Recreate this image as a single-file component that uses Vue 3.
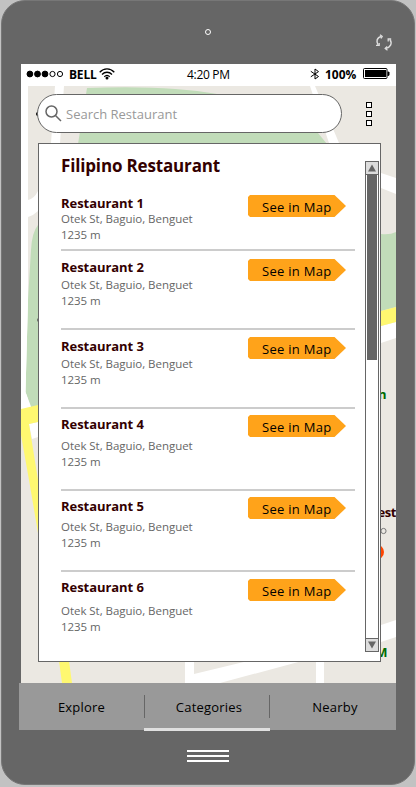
<script setup>
const restaurants = [1, 2, 3, 4, 5, 6].map((n) => ({
  name: `Restaurant ${n}`,
  address: 'Otek St, Baguio, Benguet',
  distance: '1235 m'
}))
const tabs = ['Explore', 'Categories', 'Nearby']
const activeTab = 'Categories'
</script>

<template>
  <div class="phone">
    <header class="bezel">
      <svg class="camera" width="8" height="8" viewBox="0 0 8 8"><circle cx="4" cy="4" r="2.5" /></svg>
      <svg class="rotate" width="18" height="18" viewBox="0 0 18 18">
        <path d="M3.200 11C.8 7.500 1.800 3.500 6.500 2.500M15 5.500c2.500 4 .5 8-4.500 9" />
        <path class="head" d="M5 .8 7.200 2.500 6 4.500M1 11.300h3.200V9M13.200 7.500V5h3M12.200 12.500l-2 2 2.300 1.800" />
      </svg>
    </header>

    <main class="screen">
      <div class="status">
        <svg class="signal" width="38" height="10" viewBox="0 0 38 10">
          <circle class="on" cx="3.900" cy="5" r="2.900" /><circle class="on" cx="11.500" cy="5" r="2.900" /><circle class="on" cx="19" cy="5" r="2.900" />
          <circle cx="26.500" cy="5" r="2.600" /><circle cx="34" cy="5" r="2.600" />
        </svg>
        <b class="carrier">BELL</b>
        <svg class="wifi" width="16" height="12" viewBox="0 0 16 12">
          <path d="M.7 4.200C4.800-.2 11.200-.2 15.300 4.200M3 6.500c2.900-3 7.100-3 10 0M5.300 8.700c1.600-1.600 3.800-1.600 5.400 0" />
          <circle cx="8" cy="10" r="1.500" />
        </svg>
        <span class="time">4:20 PM</span>
        <svg class="bluetooth" width="10" height="12" viewBox="0 0 10 12"><path d="M.8 3.300 8.500 8.500 5 11V1l3.500 2.600L.8 8.800" /></svg>
        <b class="percent">100%</b>
        <svg class="battery" width="27" height="12" viewBox="0 0 27 12">
          <rect class="shell" x=".5" y=".5" width="23.500" height="10" rx="1" />
          <rect x="2" y="2" width="21" height="7" /><path d="M24.500 3.500h1l1 1v2.500l-1 1h-1z" />
        </svg>
      </div>

      <div class="view">
        <svg class="map" viewBox="21 86 375 597">
          <rect x="21" y="86" width="375" height="597" fill="#ebe8e2" />
          <path class="road" d="M21 86h7v324h-7zM55 86h9l-4 57h-9zM310 86h5l24 57h-10zM381 173l15 5v16l-15-6zM28 200q6-1 10-9v20q-4 4-10 6z" />
          <path class="park" d="M87 88q80-3 130 6l101 39 9 11H78zM381 234q9 1 15-2v75l-15 4zM38 225q-6 7-7 25l-3 50-2.500 92L31 408l8-2z" />
          <path class="road" d="M28 300l-2.500 92 6 16-10.500 4V300z" />
          <path class="road" d="M381 326l15-4v16l-15 5zM29 424l9-2v15l-6 2zM381 625l15-5v17l-15 5zM185 661h9v13l54-13h54l-82 22h-35zM316 661h8v22h-8z" />
          <path class="highway" d="M381 311l15-4v15l-15 4zM21 409l17-4v17l-9 2 9 56v53l-9-53-8-45zM59 661h10l3 22H62z" />
          <text class="place" x="386.500" y="399" text-anchor="end">n</text>
          <text class="poi" x="377.500" y="517">est</text>
          <text class="place" x="387.500" y="656.500" text-anchor="end">M</text>
          <circle cx="383.500" cy="531" r="2.600" fill="none" stroke="#777" />
          <circle cx="376.500" cy="552" r="7.500" fill="#ff4500" />
          <circle cx="38" cy="114" r="2" /><circle cx="39" cy="320" r="2" fill="#666" />
        </svg>

        <div class="toolbar">
          <div class="search">
            <svg width="17" height="17" viewBox="0 0 17 17"><circle cx="6.500" cy="6.500" r="5.500" /><path d="m10.500 10.500 5.500 5.500" /></svg>
            <span>Search Restaurant</span>
          </div>
          <div class="more"><i /><i /><i /></div>
        </div>

        <section class="card">
          <div class="content">
            <h1>Filipino Restaurant</h1>
            <ul>
              <li v-for="r in restaurants" :key="r.name">
                <div class="info">
                  <h2>{{ r.name }}</h2>
                  <p>{{ r.address }}<br />{{ r.distance }}</p>
                </div>
                <a class="tag">
                  <svg width="98" height="22" viewBox="0 0 98 22"><path d="M2 0h84.500L98 11 86.500 22H2L0 20V2z" /></svg>
                  <span>See in Map</span>
                </a>
              </li>
            </ul>
          </div>
          <div class="scrollbar">
            <div class="arrow"><svg width="8" height="8" viewBox="0 0 8 8"><path d="M4 .5 8 7.500H0z" /></svg></div>
            <div class="track"><div class="thumb" /></div>
            <div class="arrow down"><svg width="8" height="8" viewBox="0 0 8 8"><path d="M4 7.500 8 .5H0z" /></svg></div>
          </div>
        </section>
      </div>
    </main>

    <nav class="tabs">
      <div v-for="t in tabs" :key="t" class="tab" :class="{ active: t === activeTab }"><span>{{ t }}</span></div>
    </nav>
    <div class="home"><i /><i /><i /></div>
  </div>
</template>

<style>
body {
  background: #c2c2c2;
}
</style>

<style scoped>
* {
  box-sizing: border-box;
}
.phone {
  display: flex;
  flex-direction: column;
  width: 414px;
  height: 785px;
  margin: 0 1px 2px;
  border: 1px solid #777;
  border-radius: 24px;
  background: #666;
  font-family: 'Open Sans', 'Noto Sans', sans-serif;
  color: #000;
}
.bezel {
  display: grid;
  grid-template-columns: 1fr 8px 1fr;
  height: 63px;
  padding: 27px 18px 0;
}
svg {
  display: block;
}
.camera {
  grid-column: 2;
  fill: none;
  stroke: #fff;
}
.rotate {
  grid-column: 3;
  justify-self: end;
  margin: 6px 3px 0 0;
  fill: none;
  stroke: #ddd;
  stroke-width: 1.5;
}
.rotate .head {
  stroke-width: 1.3;
}
.screen {
  width: 375px;
  height: 619px;
  margin-left: 19px;
}
.status {
  display: flex;
  align-items: center;
  height: 22px;
  padding: 0 6px 2px 5px;
  background: #fff;
  white-space: nowrap;
}
.signal {
  fill: none;
  stroke: #000;
  stroke-width: 1;
}
.signal .on {
  fill: #000;
}
.carrier {
  width: 30px;
  margin-left: 5px;
  font-size: 12px;
  letter-spacing: -0.2px;
}
.wifi {
  margin-bottom: 1px;
  fill: none;
  stroke: #000;
  stroke-width: 1.3;
}
.wifi circle {
  fill: #000;
  stroke: none;
}
.time {
  width: 52px;
  margin-left: 72px;
  font-size: 12px;
  letter-spacing: -0.3px;
}
.bluetooth {
  margin-left: 71px;
  fill: none;
  stroke: #000;
}
.percent {
  width: 38px;
  margin-left: 5px;
  font-size: 12px;
}
.battery .shell {
  fill: none;
  stroke: #000;
}
.view {
  position: relative;
  height: 597px;
  padding: 8px 0 0 16px;
}
.map {
  position: absolute;
  inset: 0;
  width: 375px;
  height: 597px;
}
.road {
  fill: #fff;
}
.park {
  fill: #c1dcb9;
}
.highway {
  fill: #fff870;
}
.place {
  font-size: 13px;
  font-weight: 700;
  fill: #006b00;
}
.poi {
  font-size: 13px;
  font-weight: 700;
  letter-spacing: -0.4px;
  fill: #300;
}
.toolbar {
  position: relative;
  display: flex;
  align-items: center;
}
.search {
  display: flex;
  align-items: center;
  gap: 4px;
  width: 305px;
  height: 39px;
  padding-left: 7px;
  border: 1px solid #666;
  border-radius: 20px;
  background: #fff;
  color: #999;
  font-size: 13px;
}
.search svg {
  fill: none;
  stroke: #666;
  stroke-width: 1.5;
}
.more {
  display: flex;
  flex-direction: column;
  gap: 3px;
  margin-left: 24px;
}
.more i {
  width: 6px;
  height: 6px;
  border: 1px solid #000;
  background: #fff;
}
.card {
  position: relative;
  display: flex;
  justify-content: space-between;
  width: 343px;
  height: 519px;
  margin: 10px 0 0 1px;
  border: 1px solid #666;
  background: #fff;
}
.content {
  width: 294px;
  margin-left: 22px;
}
h1 {
  height: 44px;
  margin: 0;
  padding-top: 10px;
  color: #300;
  font-size: 17px;
  letter-spacing: -0.16px;
  line-height: 24px;
}
ul {
  margin: 0;
  padding: 0;
  list-style: none;
}
li {
  display: flex;
  justify-content: space-between;
  height: 79px;
  padding: 7px 9px 0 0;
  border-bottom: 2px solid #ccc;
}
.info {
  padding-top: 1px;
}
h2 {
  margin: 0;
  color: #300;
  font-size: 13px;
  letter-spacing: -0.05px;
  line-height: 16px;
}
p {
  margin: 2px 0 0;
  color: #666;
  font-size: 11.5px;
  letter-spacing: -0.04px;
  line-height: 16px;
  white-space: nowrap;
}
.tag {
  display: grid;
  width: 98px;
  height: 22px;
  font-size: 13px;
  letter-spacing: 0.28px;
  line-height: 22px;
}
.tag > * {
  grid-area: 1 / 1;
}
.tag path {
  fill: #ffa31a;
}
.tag span {
  padding: 1px 0 0 14px;
  white-space: nowrap;
}
li:nth-child(1) {
  height: 63px;
}
li:nth-child(1) h2 {
  line-height: 15px;
}
li:nth-child(1) p {
  margin-top: 0;
}
li:nth-child(2) {
  padding-top: 8px;
}
li:nth-child(2) .info,
li:nth-child(6) .info {
  padding-top: 0;
}
li:nth-child(4) {
  height: 82px;
  padding-top: 6px;
}
li:nth-child(4) p {
  margin-top: 6px;
}
li:nth-child(5) {
  height: 81px;
  padding-top: 6px;
}
li:nth-child(5) p {
  margin-top: 5px;
}
li:nth-child(6) {
  height: 80px;
  border: 0;
}
li:nth-child(6) p {
  margin-top: 8px;
}
.scrollbar {
  display: flex;
  flex-direction: column;
  width: 14px;
  height: 491px;
  margin: 17px 1px 0 0;
  border: 1px solid #666;
}
.arrow {
  display: grid;
  place-items: center;
  height: 13px;
  border-bottom: 1px solid #666;
  background: #ddd;
  fill: #666;
}
.arrow.down {
  border-top: 1px solid #666;
  border-bottom: 0;
}
.track {
  flex: 1;
  padding: 0 1px;
}
.thumb {
  height: 185px;
  background: #666;
}
.tabs {
  display: grid;
  grid-template-columns: 125px 126px 126px;
  width: 377px;
  height: 47px;
  margin-left: 17px;
  background: #999;
}
.tab {
  position: relative;
  display: grid;
  place-items: center;
  font-size: 13px;
  letter-spacing: 0.2px;
}
.tab span {
  padding: 1px 0 0;
}
.tab + .tab span {
  padding-left: 4px;
}
.tab.active::before {
  content: '';
  position: absolute;
  inset: 12px 0 12px;
  border: solid #666;
  border-width: 0 1px;
}
.tab.active::after {
  content: '';
  position: absolute;
  inset: 45px 0 -1px;
  background: #e0e0e0;
}
.home {
  display: grid;
  gap: 3px;
  width: 42px;
  margin: 20px 0 0 185px;
}
.home i {
  height: 2px;
  background: #fff;
}
</style>
